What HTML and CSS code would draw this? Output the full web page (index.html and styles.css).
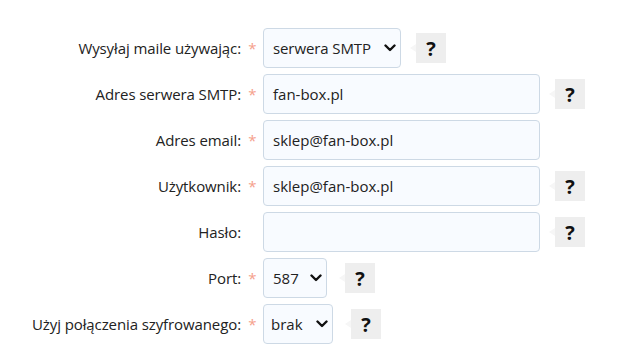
FILE: index.html
```html
<!DOCTYPE html>
<html lang="pl">
<head>
  <meta charset="UTF-8">
  <title>Ustawienia poczty</title>
  <link rel="stylesheet" href="styles.css">
</head>
<body>
  <form class="mail-form">
    <div class="row">
      <label class="label">Wysyłaj maile używając:</label>
      <span class="star">*</span>
      <div class="select select-wide"><span>serwera SMTP</span><svg class="chev" viewBox="0 0 12 8"><path d="M1.5 1.5 6 6l4.5-4.5" /></svg></div>
      <span class="help">?</span>
    </div>
    <div class="row">
      <label class="label">Adres serwera SMTP:</label>
      <span class="star">*</span>
      <div class="input">fan-box.pl</div>
      <span class="help">?</span>
    </div>
    <div class="row">
      <label class="label">Adres email:</label>
      <span class="star">*</span>
      <div class="input">sklep@fan-box.pl</div>
    </div>
    <div class="row">
      <label class="label">Użytkownik:</label>
      <span class="star">*</span>
      <div class="input">sklep@fan-box.pl</div>
      <span class="help">?</span>
    </div>
    <div class="row">
      <label class="label">Hasło:</label>
      <span class="star"></span>
      <div class="input"></div>
      <span class="help">?</span>
    </div>
    <div class="row">
      <label class="label">Port:</label>
      <span class="star">*</span>
      <div class="select select-port"><span>587</span><svg class="chev" viewBox="0 0 12 8"><path d="M1.5 1.5 6 6l4.5-4.5" /></svg></div>
      <span class="help help-far">?</span>
    </div>
    <div class="row">
      <label class="label">Użyj połączenia szyfrowanego:</label>
      <span class="star">*</span>
      <div class="select select-enc"><span>brak</span><svg class="chev" viewBox="0 0 12 8"><path d="M1.5 1.5 6 6l4.5-4.5" /></svg></div>
      <span class="help help-far">?</span>
    </div>
  </form>
</body>
</html>
```

FILE: styles.css
```css
body {
  margin: 0;
  background: #fff;
  color: #222;
  font-family: "Open Sans", "Noto Sans", sans-serif;
  font-size: 15px;
}
.mail-form {
  display: flex;
  flex-direction: column;
  gap: 6px;
  padding-top: 28px;
}
.row {
  display: flex;
  align-items: center;
  height: 40px;
}
.label {
  width: 241px;
  text-align: right;
  letter-spacing: -0.1px;
}
.star {
  width: 22px;
  text-align: center;
  color: #f5a08c;
  padding-left: 1px;
  box-sizing: border-box;
}
.input,
.select {
  box-sizing: border-box;
  height: 40px;
  border: 1px solid #cdd9e5;
  border-radius: 4px;
  background: #f8fbff;
  display: flex;
  align-items: center;
  padding: 0 9px;
}
.input {
  width: 277px;
}
.select {
  justify-content: space-between;
  padding-right: 4px;
}
.select-wide {
  width: 138px;
  letter-spacing: -0.1px;
}
.select-port {
  width: 64px;
}
.select-enc {
  width: 70px;
  padding-left: 7px;
}
.chev {
  width: 12px;
  height: 8px;
  flex-shrink: 0;
  fill: none;
  stroke: #111;
  stroke-width: 2.4;
  stroke-linecap: round;
  stroke-linejoin: round;
}
.help {
  position: relative;
  margin-left: 15px;
  width: 30px;
  height: 30px;
  background: #eee;
  display: flex;
  align-items: center;
  justify-content: center;
  font-weight: bold;
  font-size: 20px;
  color: #111;
}
.help::before {
  content: "";
  position: absolute;
  left: -6px;
  top: 11px;
  border-style: solid;
  border-width: 4px 6px 4px 0;
  border-color: transparent #f6f6f6 transparent transparent;
}
.help-far {
  margin-left: 18px;
}
```
